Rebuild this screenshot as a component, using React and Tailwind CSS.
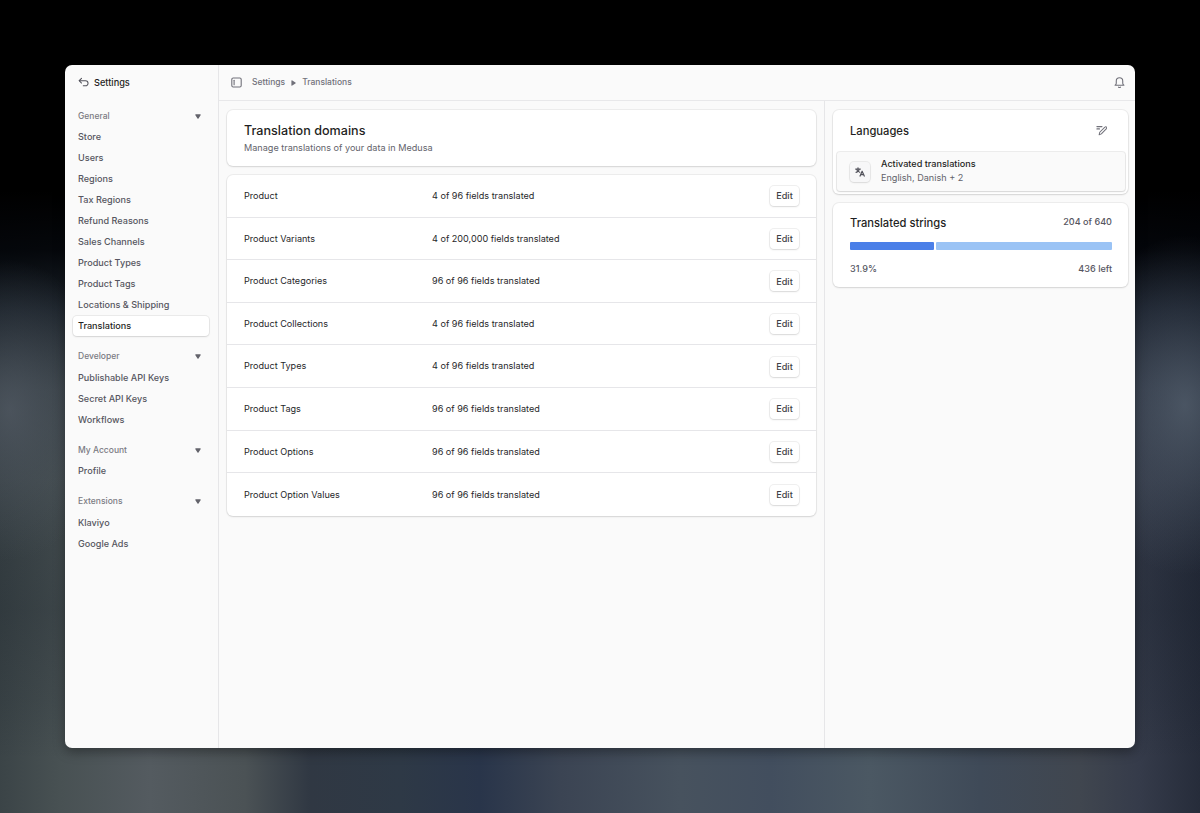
import React from 'react';

const sections = [
  {
    title: 'General',
    items: [
      'Store',
      'Users',
      'Regions',
      'Tax Regions',
      'Refund Reasons',
      'Sales Channels',
      'Product Types',
      'Product Tags',
      'Locations & Shipping',
      'Translations',
    ],
  },
  { title: 'Developer', items: ['Publishable API Keys', 'Secret API Keys', 'Workflows'] },
  { title: 'My Account', items: ['Profile'] },
  { title: 'Extensions', items: ['Klaviyo', 'Google Ads'] },
];

const domains = [
  { name: 'Product', done: '4', total: '96' },
  { name: 'Product Variants', done: '4', total: '200,000' },
  { name: 'Product Categories', done: '96', total: '96' },
  { name: 'Product Collections', done: '4', total: '96' },
  { name: 'Product Types', done: '4', total: '96' },
  { name: 'Product Tags', done: '96', total: '96' },
  { name: 'Product Options', done: '96', total: '96' },
  { name: 'Product Option Values', done: '96', total: '96' },
];

const card = 'rounded-md bg-white shadow-[0_0_0_1px_rgba(0,0,0,0.05),0_1px_2px_rgba(0,0,0,0.11)]';

// Blurred wallpaper behind the window: side glows, dark top, colour bands along the bottom
const wallpaper = [
  'radial-gradient(ellipse 100px 150px at 10px 410px, rgba(84,92,102,0.75), rgba(84,92,102,0.35) 50%, transparent)',
  'radial-gradient(ellipse 110px 170px at 1185px 405px, rgba(88,100,114,0.75), rgba(88,100,114,0.35) 50%, transparent)',
  'linear-gradient(180deg, #000 0, #000 190px, rgba(0,2,6,0.93) 250px, rgba(4,10,20,0.68) 310px, rgba(8,16,28,0.3) 390px, rgba(10,18,28,0.12) 480px, rgba(10,18,28,0.2) 610px, rgba(10,18,28,0.1) 700px, transparent 760px)',
  'linear-gradient(90deg, #3b4447 0, #485153 60px, #545b60 150px, #4b5255 245px, #303843 310px, #2e3946 400px, #29354a 480px, #3b4453 560px, #47525e 680px, #424e5e 770px, #4b5863 870px, #3f4a58 980px, #40464f 1080px, #353b4a 1140px, #262c3a 1200px)',
].join(', ');

function Sidebar() {
  return (
    <aside className="flex w-[154px] shrink-0 flex-col border-r border-[#e6e6e8]">
      <div className="flex h-[35px] items-center gap-[5px] pl-[13px] text-[9.2px] font-medium text-[#1f1f23]">
        <svg className="h-[11px] w-[11px] text-[#52525b]" viewBox="0 0 15 15" fill="none" stroke="currentColor" strokeWidth="1.4" strokeLinecap="round" strokeLinejoin="round">
          <path d="M4.8 1.8 1.6 5l3.2 3.2" />
          <path d="M1.8 5h8.4a3.500 3.500 0 0 1 0 7H7.2" />
        </svg>
        Settings
      </div>
      <nav className="flex flex-col gap-[9.5px] pt-[5.5px] pl-2 pr-[9px]">
        {sections.map((section) => (
          <div key={section.title}>
            <div className="flex h-[21px] items-center justify-between pl-[5px] pr-2 text-[8.5px] font-medium text-[#7a7a83]">
              {section.title}
              <svg className="h-[5px] w-[6px] text-[#63636b]" viewBox="0 0 6 5" fill="currentColor">
                <path d="M.8.3h4.400c.5 0 .7.5.4.9L3.500 4.400a.6.6 0 0 1-1 0L.4 1.200C.1.8.3.3.8.3z" />
              </svg>
            </div>
            {section.items.map((item) => (
              <a
                key={item}
                className={`flex items-center pl-[5px] text-[9.1px] font-medium ${
                  item === 'Translations'
                    ? 'mb-px h-5 rounded bg-white text-[#1f1f23] shadow-[0_0_0_1px_rgba(0,0,0,0.06),0_1px_2px_rgba(0,0,0,0.1)]'
                    : 'h-[21px] text-[#56565f]'
                }`}
              >
                {item}
              </a>
            ))}
          </div>
        ))}
      </nav>
    </aside>
  );
}

function Topbar() {
  return (
    <header className="flex h-9 shrink-0 items-center justify-between border-b border-[#e8e8ea] pl-3 pr-[10px] text-[#71717a]">
      <div className="flex items-center text-[8.5px] font-medium">
        <svg className="mr-[10px] h-[11px] w-[11px]" viewBox="0 0 11 11" fill="none" stroke="currentColor" strokeWidth="1.1" strokeLinecap="round">
          <rect x="0.8" y="1" width="9.4" height="9" rx="1.4" />
          <path d="M3.1 3.2v4.6" />
        </svg>
        <span>Settings</span>
        <svg className="mx-[6px] h-[6px] w-[5px]" viewBox="0 0 5 6" fill="currentColor">
          <path d="M.4.8v4.400c0 .5.5.7.9.4l3.100-2.100a.6.6 0 0 0 0-1L1.300.4C.9.1.4.3.4.8z" />
        </svg>
        <span>Translations</span>
      </div>
      <svg className="h-[11px] w-[11px]" viewBox="0 0 15 15" fill="none" stroke="currentColor" strokeWidth="1.5" strokeLinecap="round" strokeLinejoin="round">
        <path d="M1.5 11.2c1-.6 1.600-1.400 1.600-2.600V5.400a4.400 4.400 0 0 1 8.800 0v3.200c0 1.200.6 2 1.600 2.600z" />
        <path d="M6.3 13.9c.7.5 1.700.5 2.400 0" />
      </svg>
    </header>
  );
}

function DomainRow({ domain }) {
  return (
    <div className="flex h-[42.6px] items-center border-b border-[#e6e6e9] pl-[17px] pr-[17px] text-[9.1px] text-[#27272a] last:border-b-0">
      <span className="w-[188px]">{domain.name}</span>
      <span className="flex-1">{`${domain.done} of ${domain.total} fields translated`}</span>
      <button className="mt-px flex h-5 w-[29px] items-center justify-center rounded bg-white text-[9.1px] font-medium text-[#3f3f46] shadow-[0_0_0_1px_rgba(0,0,0,0.06),0_1px_2px_rgba(0,0,0,0.1)]">
        Edit
      </button>
    </div>
  );
}

function Languages() {
  return (
    <section className={`${card} h-[84px] px-[3px]`}>
      <div className="flex h-[42px] items-center justify-between pl-[14px] pr-[18px]">
        <h2 className="text-[11.2px] font-medium text-[#1f1f23]">Languages</h2>
        <svg className="mb-0.5 h-[11px] w-[11px] text-[#71717a]" viewBox="0 0 15 15" fill="none" stroke="currentColor" strokeWidth="1.4" strokeLinecap="round" strokeLinejoin="round">
          <path d="M1.2 2.2h7M1.2 5.3h3.6" />
          <path d="M4.3 13.4l.8-3.500 7-7.100a1.500 1.500 0 0 1 2.200 0 1.500 1.500 0 0 1 0 2.100l-7 7.200z" />
        </svg>
      </div>
      <div className="ml-px flex h-[39px] items-center gap-[11px] rounded-[3px] bg-[#fafafa] pl-[13px] shadow-[0_0_0_1px_rgba(0,0,0,0.07),0_1px_2px_rgba(0,0,0,0.1)]">
        <div className="flex h-5 w-5 items-center justify-center rounded bg-[#f7f7f8] text-[#52525b] shadow-[0_0_0_1px_rgba(0,0,0,0.06),0_1px_2px_rgba(0,0,0,0.08)]">
          <svg className="h-[10px] w-[10px]" viewBox="0 0 15 15" fill="none" stroke="currentColor" strokeWidth="1.8" strokeLinecap="round" strokeLinejoin="round">
            <path d="M1 3.1h7M4.5 1.3v1.8M2.3 3.3c.7 2.5 2.7 4 4.800 4.600M6.700 3.300C6 5.800 4 7.400 1.600 8" />
            <path d="M7.600 13.600 10.700 6.300l3.200 7.300M8.700 11.400h4.100" />
          </svg>
        </div>
        <div className="mb-px leading-[14px]">
          <p className="text-[9.1px] font-medium text-[#1f1f23]">Activated translations</p>
          <p className="text-[9.1px] text-[#63636b]">English, Danish + 2</p>
        </div>
      </div>
    </section>
  );
}

function TranslatedStrings() {
  const translated = 204;
  const total = 640;

  return (
    <section className={`${card} h-[84px] pl-[17px] pr-4 text-[9.1px] text-[#56565f]`}>
      <div className="flex h-[39px] items-center justify-between">
        <h2 className="pt-px text-[11.2px] font-medium text-[#1f1f23]">Translated strings</h2>
        <span className="mb-px font-medium">{translated} of {total}</span>
      </div>
      <div className="flex h-2 gap-[2px]">
        <div className="rounded-[1px] bg-[#4a7fe8]" style={{ width: `${(translated / total) * 100}%` }} />
        <div className="flex-1 rounded-[1px] bg-[#9ac3f5]" />
      </div>
      <div className="flex h-[37px] items-center justify-between font-medium">
        <span>31.9%</span>
        <span>{total - translated} left</span>
      </div>
    </section>
  );
}

function App() {
  return (
    <div
      className="flex h-[813px] w-[1200px] items-start overflow-hidden pl-[65px] pt-[65px] font-['Inter',sans-serif] antialiased"
      style={{ background: wallpaper }}
    >
      <div className="flex h-[683px] w-[1070px] overflow-hidden rounded-[7px] bg-[#fafafa] shadow-[0_4px_12px_rgba(0,0,0,0.35)]">
        <Sidebar />
        <div className="flex min-w-0 flex-1 flex-col">
          <Topbar />
          <div className="flex min-h-0 flex-1">
            <main className="flex flex-1 flex-col gap-[9px] px-2 pt-[9px]">
              <section className={`${card} h-14 pl-[17px] pt-3`}>
                <h1 className="text-[12.6px] leading-[17px] font-medium text-[#1f1f23]">Translation domains</h1>
                <p className="mt-px text-[9.1px] leading-[15px] text-[#63636b]">Manage translations of your data in Medusa</p>
              </section>
              <section className={card}>
                {domains.map((domain) => (
                  <DomainRow key={domain.name} domain={domain} />
                ))}
              </section>
            </main>
            <div className="flex w-[311px] flex-col gap-[9px] border-l border-[#e6e6e8] pl-2 pr-[7px] pt-[9px]">
              <Languages />
              <TranslatedStrings />
            </div>
          </div>
        </div>
      </div>
    </div>
  );
}

export default App;
